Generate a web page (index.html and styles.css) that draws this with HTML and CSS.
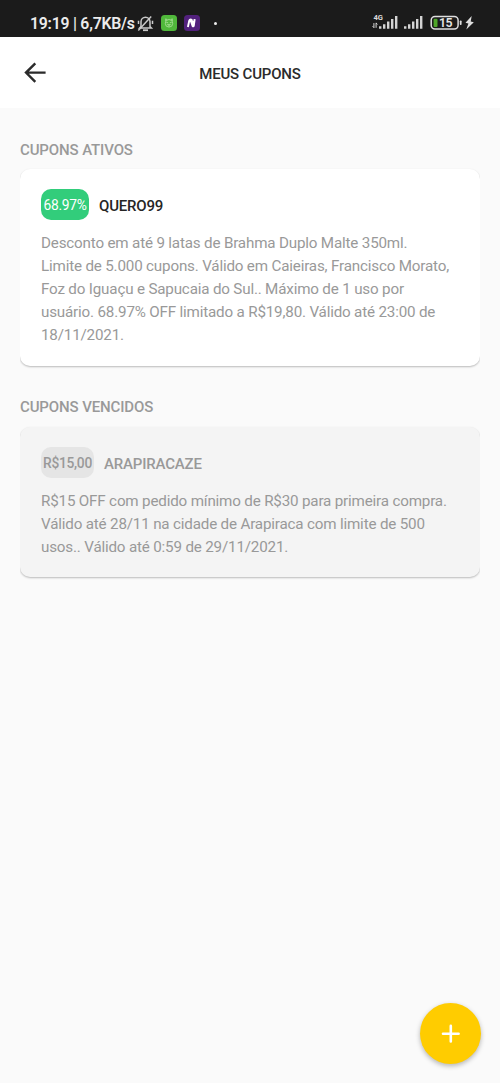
FILE: index.html
```html
<!DOCTYPE html>
<html lang="pt-BR">
<head>
<meta charset="utf-8">
<title>Meus cupons</title>
<link rel="stylesheet" href="styles.css">
</head>
<body>
<div class="screen">
  <div class="status">
    <div class="status-left">
      <span class="clock">19:19 | 6,7KB/s</span>
      <svg class="bell" width="17" height="17" viewBox="0 0 17 17" fill="none" stroke="#c9c9c9" stroke-width="1.5">
        <path d="M4 11.6V6.8a4.5 4.5 0 0 1 9 0v4.8l1.4 1.4H2.6zM1.5 9V5.8M15.5 9V5.8"/>
        <path d="M6 15.2h5" stroke-width="1.8"/>
        <path d="M1.3 15.4L14.2 1.6"/>
      </svg>
      <svg class="app-green" width="16" height="16" viewBox="0 0 16 16" fill="none">
        <rect width="16" height="16" rx="3.5" fill="#50b83b"/>
        <ellipse cx="8" cy="8.3" rx="3.7" ry="3.8" stroke="#a5dc94" stroke-width=".9"/>
        <path d="M4.7 6.2V3.8l1.7 1M11.3 6.2V3.8l-1.7 1M5.3 7.6h1.9M8.8 7.6h1.9M6.2 9.4h3.6M6.8 10.8h2.4" stroke="#a5dc94" stroke-width=".9"/>
      </svg>
      <svg class="app-purple" width="16" height="16" viewBox="0 0 16 16">
        <rect width="16" height="16" rx="3.5" fill="#52217c"/>
        <path d="M3.9 12L5.3 5.6Q5.6 4.5 6.7 4.5T8 5.5L9.2 10.3L10.7 4.2M10.7 4.2L9.8 10.8Q9.3 11.7 8.6 11L6.7 5.4" fill="none" stroke="#fff" stroke-width="1.9"/>
      </svg>
      <span class="dot"></span>
    </div>
    <svg class="status-right" width="106" height="20" viewBox="0 0 106 20">
      <text class="network" x="2.6" y="7.2">4G</text>
      <path d="M2.9 14.8v-4.7M1.6 13.2l1.3 1.4M5.1 9.8v5M5.1 10l1.3 1.4" fill="none" stroke="#dadada"/>
      <g fill="#d4d4d4">
        <path d="M8 13.2h2.4v2.5H8zM12 11.2h2.4v4.5H12zM16 8.6h2.4v7.1H16zM20 6h2.4v9.7H20zM24 3h2.4v12.7H24z"/>
        <path d="M33 13.2h2.4v2.5H33zM37 11.2h2.4v4.5H37zM41 8.6h2.4v7.1H41zM45 6h2.4v9.7H45zM49 3h2.4v12.7H49z"/>
      </g>
      <rect x="60.2" y="3.5" width="26.9" height="12.6" rx="3.8" fill="none" stroke="#dedede" stroke-width="1.5"/>
      <rect x="88.8" y="7.5" width="1.8" height="4.6" rx=".8" fill="#dedede"/>
      <rect x="62.6" y="5.7" width="3.9" height="8.2" rx="1" fill="#4fa629"/>
      <text class="battery" x="68" y="14">15</text>
      <path d="M100.7 3l-6.2 6.7 2.9.7-2.1 6.2 7.5-7.4-3.1-.6z" fill="#dedede"/>
    </svg>
  </div>
  <header class="topbar">
    <svg class="back" width="24" height="24" viewBox="0 0 24 24" fill="none" stroke="#2b2b2b" stroke-width="2.4">
      <path d="M12.3 2.4L3 11.6l9.3 9.2M3 11.6h19.6"/>
    </svg>
    <h1 class="title">MEUS CUPONS</h1>
  </header>
  <main class="content">
    <h2 class="label active-label">CUPONS ATIVOS</h2>
    <article class="card">
      <div class="card-head"><span class="badge">68.97%</span><h3 class="code">QUERO99</h3></div>
      <p class="desc">Desconto em até 9 latas de Brahma Duplo Malte 350ml.<br>Limite de 5.000 cupons. Válido em Caieiras, Francisco Morato,<br>Foz do Iguaçu e Sapucaia do Sul.. Máximo de 1 uso por<br>usuário. 68.97% OFF limitado a R$19,80. Válido até 23:00 de<br>18/11/2021.</p>
    </article>
    <h2 class="label expired-label">CUPONS VENCIDOS</h2>
    <article class="card expired">
      <div class="card-head"><span class="badge">R$15,00</span><h3 class="code">ARAPIRACAZE</h3></div>
      <p class="desc">R$15 OFF com pedido mínimo de R$30 para primeira compra.<br>Válido até 28/11 na cidade de Arapiraca com limite de 500<br>usos.. Válido até 0:59 de 29/11/2021.</p>
    </article>
  </main>
  <button class="fab" aria-label="Adicionar">
    <svg width="20" height="20" viewBox="0 0 20 20" fill="none" stroke="#fff" stroke-width="2.6" stroke-linecap="round"><path d="M9.8 1.9v15.6M2 9.7h15.6"/></svg>
  </button>
</div>
</body>
</html>
```
FILE: styles.css
```css
* { box-sizing: border-box; }
body { margin: 0; font-family: Roboto, "Liberation Sans", sans-serif; }
h1, h2, h3, p { margin: 0; font-weight: 500; }
.screen { position: relative; height: 1083px; background: #fafafa; overflow: hidden; }
.status { display: flex; justify-content: space-between; height: 37px; padding: 13px 23px 0 30px; background: #1b1b1b; }
.status-left { display: flex; align-items: center; height: 20px; }
.clock { width: 107px; padding-top: 2px; font-size: 15.8px; font-weight: 600; line-height: 20px; letter-spacing: -.23px; color: #ececec; white-space: nowrap; }
.app-green { margin-left: 7px; }
.app-purple { margin-left: 7px; }
.dot { width: 3px; height: 3px; margin-left: 14px; border-radius: 50%; background: #eee; }
.battery { font: 600 12.3px Roboto, sans-serif; letter-spacing: -.5px; fill: #e6e6e6; }
.network { font: 700 7.6px Roboto, sans-serif; letter-spacing: -.2px; fill: #dadada; }
.topbar { display: grid; grid-template-columns: 48px 1fr 48px; align-items: center; height: 71px; padding: 1px 23px 0; background: #fff; }
.title { padding-top: 2px; font-size: 15px; line-height: 20px; letter-spacing: -.18px; text-align: center; color: #2b2b2b; }
.content { padding: 32px 20px 0; }
.label { font-size: 15px; line-height: 20px; letter-spacing: -.12px; color: #999; }
.expired-label { margin-top: 31px; }
.card { margin-top: 9px; height: 197px; padding: 20px 20px 0 21px; border-radius: 10px; background: #fff; box-shadow: 0 1px 2px rgba(0, 0, 0, .26); clip-path: inset(-3px 0 -6px 0); }
.card.expired { margin-top: 10px; height: 150px; background: #f4f4f4; }
.card-head { display: flex; align-items: center; gap: 10px; height: 31px; }
.badge { width: 48px; height: 31px; border-radius: 10px; background: #32cd7b; color: #fff; font-size: 13.8px; line-height: 33px; letter-spacing: -.3px; text-align: center; white-space: nowrap; }
.expired .badge { width: 53px; background: #e5e5e5; color: #999; font-weight: 500; }
.code { padding-top: 2px; font-size: 15px; line-height: 20px; letter-spacing: -.18px; color: #252525; }
.expired .code { color: #999; }
.desc { margin-top: 12px; font-size: 15.2px; font-weight: 400; line-height: 23.1px; letter-spacing: -.18px; color: #999; white-space: nowrap; }
.fab { position: absolute; left: 420px; top: 1003px; display: flex; align-items: center; justify-content: center; width: 61px; height: 61px; padding: 0; border: 0; border-radius: 50%; background: #fc0; box-shadow: 0 2px 5px rgba(0, 0, 0, .28); }
```
